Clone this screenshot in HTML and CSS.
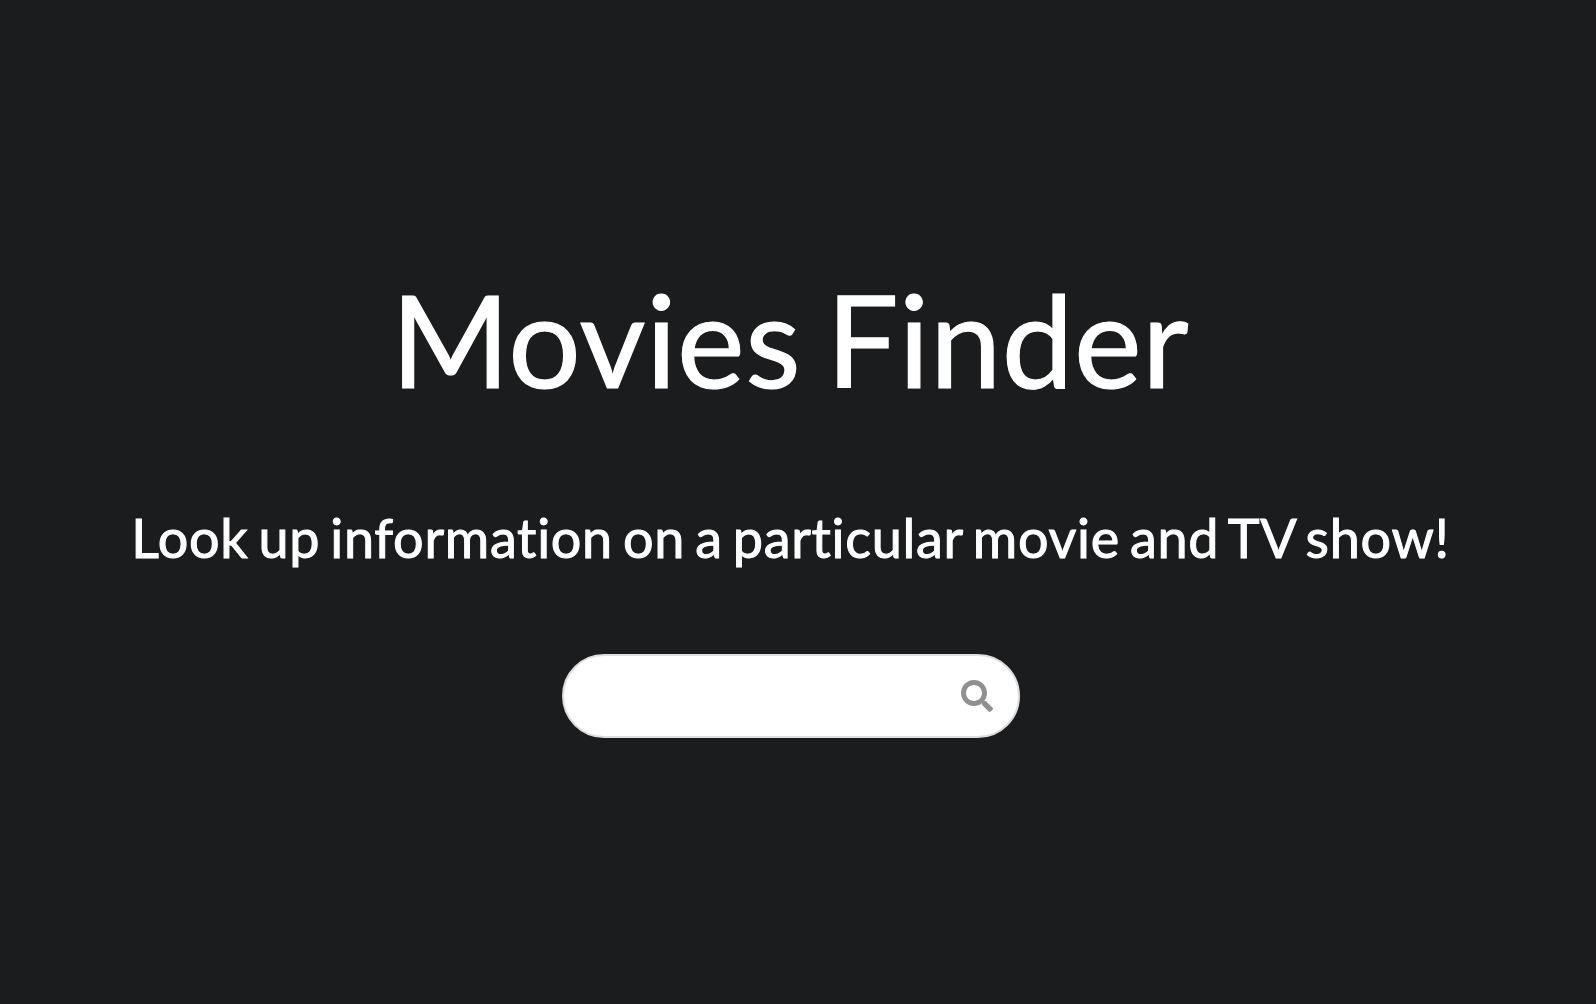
FILE: index.html
```html
<!DOCTYPE html>
<html lang="en">
<head>
<meta charset="utf-8">
<title>Movies Finder</title>
<link rel="stylesheet" href="styles.css">
</head>
<body>
<main class="home">
  <h1 class="title">Movies Finder</h1>
  <h2 class="subtitle">Look up information on a particular movie and TV show!</h2>
  <form class="search">
    <input class="search-input" type="text" aria-label="Search">
    <svg class="search-icon" viewBox="0 0 512 512" aria-hidden="true"><path d="M505 442.7L405.300 343c-4.500-4.500-10.600-7-17-7H372c27.600-35.300 44-79.700 44-128C416 93.100 322.900 0 208 0S0 93.100 0 208s93.100 208 208 208c48.300 0 92.700-16.400 128-44v16.300c0 6.400 2.500 12.500 7 17l99.700 99.700c9.400 9.400 24.600 9.400 33.900 0l28.300-28.300c9.400-9.400 9.400-24.600.1-34zM208 336c-70.700 0-128-57.200-128-128 0-70.700 57.200-128 128-128 70.700 0 128 57.200 128 128 0 70.700-57.200 128-128 128z"/></svg>
  </form>
</main>
</body>
</html>
```
FILE: styles.css
```css
* { box-sizing: border-box; }
body {
  margin: 0;
  height: 100vh;
  overflow: hidden;
  background: #1b1c1d;
  color: #fff;
  font-family: Lato, sans-serif;
  font-variant-ligatures: none;
}
.home {
  display: flex;
  flex-direction: column;
  align-items: center;
  padding: 257px 14px 0 0;
}
.title {
  margin: 0;
  padding-right: 2px;
  font-size: 128px;
  line-height: 164px;
  font-weight: 400;
  letter-spacing: 0.45px;
  word-spacing: -8px;
  -webkit-text-stroke: 1.2px #fff;
  white-space: nowrap;
}
.subtitle {
  margin: 82px 0 0;
  padding-right: 1px;
  font-size: 54px;
  line-height: 70px;
  font-weight: 400;
  letter-spacing: 0.7px;
  word-spacing: -4.5px;
  -webkit-text-stroke: 1px #fff;
  white-space: nowrap;
}
.search {
  display: flex;
  align-items: center;
  width: 458px;
  height: 84px;
  margin-top: 81px;
  padding-right: 25px;
  background: #fff;
  border: 2px solid #dededf;
  border-radius: 42px;
}
.search-input {
  flex: 1;
  min-width: 0;
  height: 100%;
  padding: 0 28px;
  border: 0;
  outline: 0;
  background: transparent;
  font: 28px Lato, sans-serif;
}
.search-icon {
  width: 32px;
  height: 32px;
  fill: #909090;
}
```
